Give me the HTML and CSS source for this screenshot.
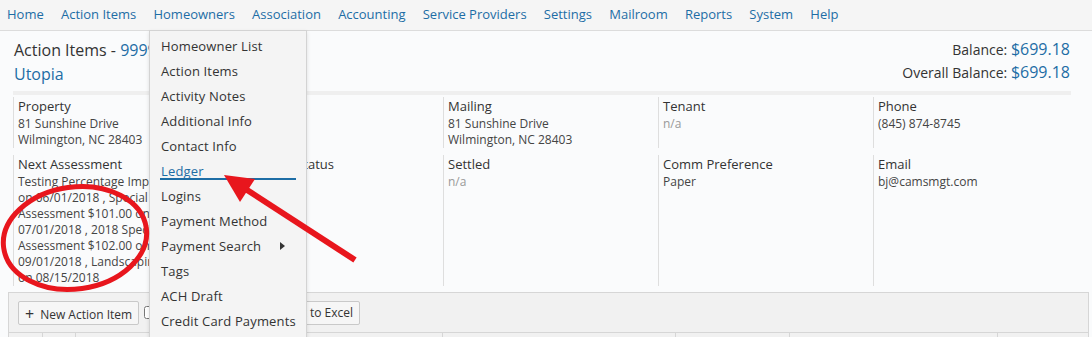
FILE: index.html
```html
<!DOCTYPE html>
<html lang="en">
<head>
    <meta charset="utf-8">
    <title>Action Items</title>
    <link rel="stylesheet" href="styles.css">
</head>
<body>
    <!-- top navigation -->
    <nav class="topnav">
        <a href="#">Home</a>
        <a href="#">Action Items</a>
        <a href="#">Homeowners</a>
        <a href="#">Association</a>
        <a href="#">Accounting</a>
        <a href="#">Service Providers</a>
        <a href="#">Settings</a>
        <a href="#">Mailroom</a>
        <a href="#">Reports</a>
        <a href="#">System</a>
        <a href="#">Help</a>
    </nav>

    <div class="page">
        <div class="head">
            <div class="title">
                <div>Action Items - <a href="#">9999 Mockingbird Lane</a></div>
                <div><a href="#">Utopia</a></div>
            </div>
            <div class="balances">
                <div>Balance: <span class="amount">$699.18</span></div>
                <div>Overall Balance: <span class="amount">$699.18</span></div>
            </div>
        </div>

        <div class="stripe"></div>

        <!-- homeowner details -->
        <div class="info">
            <div class="cell">
                <div class="label">Property</div>
                <div class="value">81 Sunshine Drive<br>Wilmington, NC 28403</div>
            </div>
            <div class="cell">
                <div class="label">Owner</div>
                <div class="value">Bob Jones</div>
            </div>
            <div class="cell">
                <div class="label">Mailing</div>
                <div class="value">81 Sunshine Drive<br>Wilmington, NC 28403</div>
            </div>
            <div class="cell">
                <div class="label">Tenant</div>
                <div class="value muted">n/a</div>
            </div>
            <div class="cell">
                <div class="label">Phone</div>
                <div class="value">(845) 874-8745</div>
            </div>

            <div class="cell">
                <div class="label">Next Assessment</div>
                <div class="value">Testing Percentage Improvement on 06/01/2018 , Special Assessment $101.00 on 07/01/2018 , 2018 Special Assessment $102.00 on 09/01/2018 , Landscaping $75.00 on 08/15/2018</div>
            </div>
            <div class="cell">
                <div class="label">Collection Status</div>
                <div class="value">Current</div>
            </div>
            <div class="cell">
                <div class="label">Settled</div>
                <div class="value muted">n/a</div>
            </div>
            <div class="cell">
                <div class="label">Comm Preference</div>
                <div class="value">Paper</div>
            </div>
            <div class="cell">
                <div class="label">Email</div>
                <div class="value">bj@camsmgt.com</div>
            </div>
        </div>

        <!-- action items grid -->
        <div class="grid-box">
            <div class="toolbar">
                <button class="btn"><span class="plus">+</span>New Action Item</button>
                <label class="check"><input type="checkbox"> Completed</label>
                <button class="btn">Export to Excel</button>
            </div>
            <div class="thead">
                <div></div><div></div><div></div><div></div><div></div><div></div><div></div>
            </div>
        </div>
    </div>

    <!-- open Homeowners menu -->
    <ul class="dropdown">
        <li>Homeowner List</li>
        <li>Action Items</li>
        <li>Activity Notes</li>
        <li>Additional Info</li>
        <li>Contact Info</li>
        <li class="active">Ledger</li>
        <li>Logins</li>
        <li>Payment Method</li>
        <li class="sub">Payment Search</li>
        <li>Tags</li>
        <li>ACH Draft</li>
        <li>Credit Card Payments</li>
    </ul>

    <!-- red markup drawn on the screenshot -->
    <svg class="markup" width="1092" height="337" viewBox="0 0 1092 337">
        <ellipse cx="75" cy="238" rx="72" ry="51" transform="rotate(-8 75 238)" fill="none" stroke="#e8161d" stroke-width="5"/>
        <line x1="355" y1="260" x2="244" y2="188" stroke="#e8161d" stroke-width="6"/>
        <polygon points="224,175 255,179 240,202" fill="#e8161d"/>
    </svg>
</body>
</html>
```

FILE: styles.css
```css
body {
    margin: 0;
    font-family: "Open Sans", "Liberation Sans", sans-serif;
    color: #333;
    background: #fafbfc;
}

a {
    color: #1d6da5;
    text-decoration: none;
}

/* top navigation */
.topnav {
    display: flex;
    height: 30px;
    background: #f5f5f5;
    border-bottom: 1px solid #dcdcdc;
}

.topnav a {
    padding: 0 8.6px;
    line-height: 29px;
    font-size: 13px;
}

.topnav a:first-child {
    padding-left: 7px;
}

.page {
    padding: 0 3px 0 8px;
}

.head {
    display: flex;
    justify-content: space-between;
    padding: 7px 19px 0 6px;
}

.title {
    font-size: 16px;
    line-height: 24px;
}

.balances {
    text-align: right;
    font-size: 14px;
    line-height: 23px;
}

.amount {
    color: #1d6da5;
    font-size: 16px;
}

.stripe {
    height: 4px;
    margin: 5px 18px 0 5px;
    background: #efefef;
}

/* details */
.info {
    display: grid;
    grid-template-columns: repeat(5, 215px);
    row-gap: 7px;
    margin: 2px 0 0 5px;
}

.cell {
    border-left: 1px solid #dedede;
    padding: 0 15px 0 4px;
}

.label {
    font-size: 13px;
    line-height: 19px;
}

.value {
    font-size: 12px;
    line-height: 16px;
    color: #444;
}

.muted {
    color: #999;
}

/* grid with toolbar */
.grid-box {
    margin-top: 6px;
    border: 1px solid #d6d6d6;
    border-bottom: none;
}

.toolbar {
    display: flex;
    align-items: center;
    height: 39px;
    padding-left: 9px;
    background: #f1f1f1;
    border-bottom: 1px solid #d6d6d6;
}

.btn {
    height: 24px;
    padding: 0 6px;
    font-family: inherit;
    font-size: 12px;
    color: #333;
    background: #f6f6f6;
    border: 1px solid #c9c9c9;
    border-radius: 2px;
}

.plus {
    font-size: 16px;
    margin-right: 6px;
    position: relative;
    top: 1px;
}

.check {
    display: flex;
    align-items: center;
    width: 119px;
    margin-left: 5px;
    font-size: 12px;
}

.check input {
    margin: 0 4px 0 0;
}

.thead {
    display: grid;
    grid-template-columns: 34px 33px 367px 233px 114px 208px 1fr;
    height: 30px;
    background: #f1f1f1;
}

.thead div {
    border-right: 1px solid #d6d6d6;
}

.thead div:last-child {
    border-right: none;
}

/* dropdown menu */
.dropdown {
    position: absolute;
    top: 30px;
    left: 149px;
    width: 156px;
    height: 320px;
    margin: 0;
    padding: 3px 0 0 0;
    list-style: none;
    background: #f4f4f4;
    border: 1px solid #d3d3d3;
    box-shadow: 0 2px 4px rgba(0, 0, 0, 0.12);
}

.dropdown li {
    position: relative;
    height: 25px;
    line-height: 24px;
    padding-left: 11px;
    font-size: 13px;
    letter-spacing: 0.15px;
    color: #333;
}

.dropdown li.active {
    color: #1d6da5;
}

.dropdown li.active::after {
    content: "";
    position: absolute;
    left: 10px;
    right: 10px;
    top: 19px;
    height: 2px;
    background: #1d6da5;
}

.dropdown li.sub::after {
    content: "";
    position: absolute;
    left: 130px;
    top: 8px;
    border-left: 5px solid #333;
    border-top: 4px solid transparent;
    border-bottom: 4px solid transparent;
}

.markup {
    position: absolute;
    top: 0;
    left: 0;
    pointer-events: none;
}
```
